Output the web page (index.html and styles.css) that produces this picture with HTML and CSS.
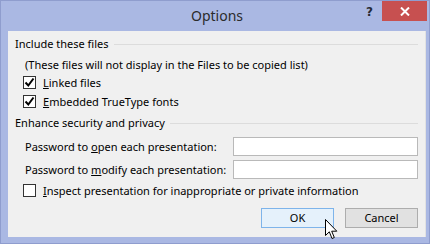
FILE: index.html
```html
<!DOCTYPE html>
<html lang="en">
<head>
    <meta charset="UTF-8">
    <title>Options</title>
    <link rel="stylesheet" href="styles.css">
</head>
<body>
    <div class="window">
        <div class="titlebar">
            <div class="title">Options</div>
            <div class="help">?</div>
            <div class="close">
                <svg width="10" height="9" viewBox="0 0 10 9">
                    <path d="M1 0.5 L9 8.5 M9 0.5 L1 8.5" stroke="#fff" stroke-width="2"/>
                </svg>
            </div>
        </div>

        <div class="panel">
            <div class="group-title"><span>Include these files</span><i class="rule"></i></div>
            <div class="note">(These files will not display in the Files to be copied list)</div>
            <div class="check-row">
                <span class="box checked"><svg width="11" height="11" viewBox="0 0 11 11"><path d="M1.5 5.5 L4.3 8.5 L9.5 1.5" fill="none" stroke="#000" stroke-width="2"/></svg></span>
                <span><u>L</u>inked files</span>
            </div>
            <div class="check-row">
                <span class="box checked"><svg width="11" height="11" viewBox="0 0 11 11"><path d="M1.5 5.5 L4.3 8.5 L9.5 1.5" fill="none" stroke="#000" stroke-width="2"/></svg></span>
                <span><u>E</u>mbedded TrueType fonts</span>
            </div>

            <div class="group-title second"><span>Enhance security and privacy</span><i class="rule"></i></div>
            <div class="field-row">
                <label>Password to <u>o</u>pen each presentation:</label>
                <div class="textbox"></div>
            </div>
            <div class="field-row next">
                <label>Password to <u>m</u>odify each presentation:</label>
                <div class="textbox"></div>
            </div>
            <div class="check-row inspect">
                <span class="box"></span>
                <span><u>I</u>nspect presentation for inappropriate or private information</span>
            </div>

            <div class="buttons">
                <div class="btn default">OK</div>
                <div class="btn">Cancel</div>
            </div>
        </div>

        <svg class="cursor" width="13" height="21" viewBox="0 0 13 21">
            <path d="M0.5 0.5 L0.5 16.5 L4.3 12.8 L7 19.5 L9.3 18.5 L6.7 12.2 L11.8 12.2 Z" fill="#fff" stroke="#000" stroke-width="1"/>
        </svg>
    </div>
</body>
</html>
```

FILE: styles.css
```css
body {
    margin: 0;
    background: #ffffff;
    font-family: 'Noto Sans', 'DejaVu Sans', sans-serif;
    font-size: 11px;
    color: #000;
}

.window {
    position: relative;
    width: 430px;
    height: 244px;
    box-sizing: border-box;
    background: #aab8e3;
    border: 1px solid #8f9dce;
    padding: 0 3px 0 7px;
}

.titlebar {
    position: relative;
    height: 30px;
    display: flex;
    justify-content: center;
    align-items: center;
}

.title {
    font-size: 14px;
    color: #2b2b2b;
    margin-top: -1px;
}

.help {
    position: absolute;
    left: 358px;
    top: 4px;
    font-family: 'DejaVu Sans', sans-serif;
    font-weight: bold;
    font-size: 12px;
    color: #262a33;
}

.close {
    position: absolute;
    left: 374px;
    top: 0;
    width: 45px;
    height: 20px;
    background: #c75050;
    display: flex;
    align-items: center;
    justify-content: center;
}

.panel {
    background: #f0f0f0;
    padding: 5px 7px 9px 7px;
    border-right: 1px solid #e2e2e2;
}

.group-title {
    display: flex;
    align-items: center;
    height: 16px;
    line-height: 16px;
    white-space: nowrap;
}

.group-title .rule {
    flex: 1;
    border-top: 1px solid #dcdcdc;
    margin-left: 5px;
}

.group-title.second {
    margin-top: 4px;
}

.note {
    margin-top: 5px;
    height: 16px;
    line-height: 16px;
    padding-left: 10px;
    white-space: nowrap;
}

.check-row {
    display: flex;
    align-items: center;
    height: 19px;
    padding-left: 8px;
    gap: 7px;
    white-space: nowrap;
}

.check-row.inspect {
    margin-top: 2px;
}

.box {
    width: 11px;
    height: 11px;
    border: 1px solid #333;
    background: #fff;
    display: flex;
    align-items: center;
    justify-content: center;
}

.field-row {
    display: flex;
    align-items: center;
    justify-content: space-between;
    height: 19px;
    margin-top: 6px;
    padding-left: 10px;
    white-space: nowrap;
}

.field-row.next {
    margin-top: 4px;
}

.textbox {
    width: 183px;
    height: 17px;
    background: #fff;
    border: 1px solid #b9b9b9;
}

.buttons {
    display: flex;
    justify-content: flex-end;
    gap: 11px;
    margin-top: 8px;
}

.btn {
    width: 71px;
    height: 18px;
    line-height: 18px;
    text-align: center;
    background: #e1e1e1;
    border: 1px solid #adadad;
}

.btn.default {
    background: #e5f1fb;
    border-color: #7eb4ea;
}

.cursor {
    position: absolute;
    left: 324px;
    top: 218px;
}
```
